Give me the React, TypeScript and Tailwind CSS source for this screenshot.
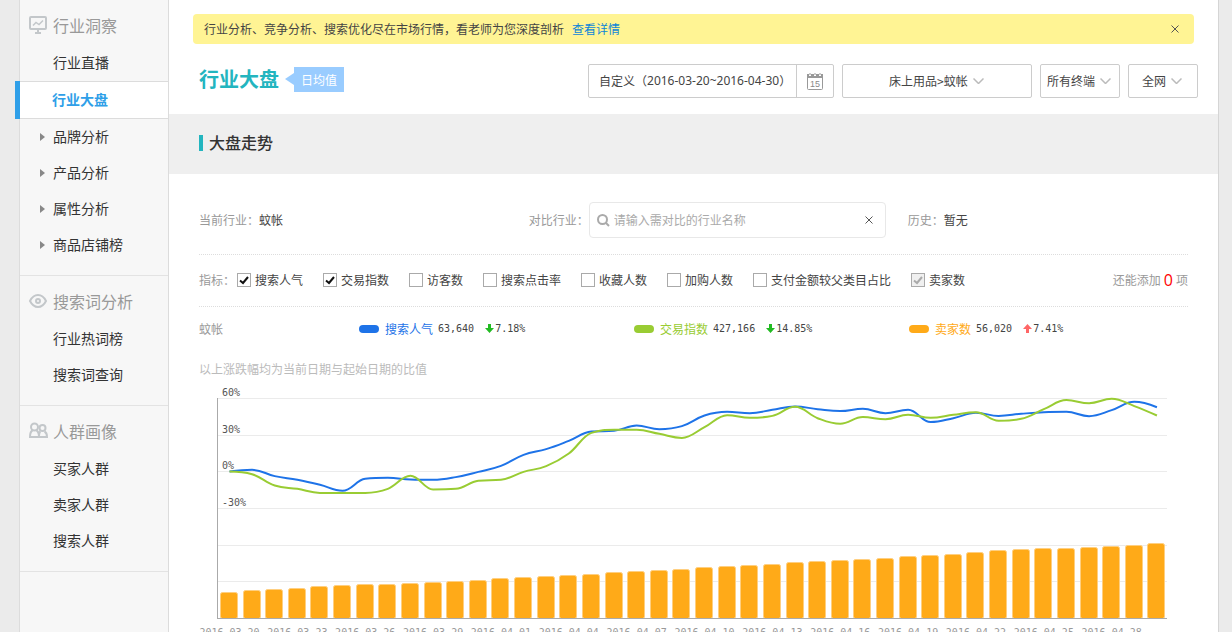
import { useState } from "react";
import type { ReactNode } from "react";

const trendIcon = (
  <svg width="20" height="20" viewBox="0 0 20 20" fill="none" stroke="#c3c7ca" strokeWidth="2">
    <rect x="2" y="2" width="16" height="12" rx="1" />
    <path d="M5 10.500l3-3 3 2 4-4" strokeWidth="1.5" />
    <path d="M10 14v4M7 18h6" />
  </svg>
);

const eyeIcon = (
  <svg width="20" height="20" viewBox="0 0 20 20" fill="none" stroke="#c3c7ca" strokeWidth="2">
    <path d="M2 10c2-4 5-6 8-6s6 2 8 6c-2 4-5 6-8 6s-6-2-8-6z" />
    <circle cx="10" cy="10" r="2" />
  </svg>
);

const peopleIcon = (
  <svg width="20" height="20" viewBox="0 0 20 20" fill="none" stroke="#c3c7ca" strokeWidth="2">
    <circle cx="6.500" cy="6" r="3.500" />
    <circle cx="14.500" cy="7" r="3" />
    <path d="M4.500 9.500C2.500 10.500 2 12 2 16h9c0-4-.5-5.500-2.500-6.500" />
    <path d="M12.500 10.500c-1 .5-1.500 1.500-1.500 5.500h8c0-3.500-.5-4.500-2.500-5.500" />
  </svg>
);

interface MenuItem {
  name: string;
  active?: boolean;
  expandable?: boolean;
}

interface MenuGroup {
  title: string;
  icon: ReactNode;
  items: MenuItem[];
}

const menu: MenuGroup[] = [
  {
    title: "行业洞察",
    icon: trendIcon,
    items: [
      { name: "行业直播" },
      { name: "行业大盘", active: true },
      { name: "品牌分析", expandable: true },
      { name: "产品分析", expandable: true },
      { name: "属性分析", expandable: true },
      { name: "商品店铺榜", expandable: true },
    ],
  },
  {
    title: "搜索词分析",
    icon: eyeIcon,
    items: [{ name: "行业热词榜" }, { name: "搜索词查询" }],
  },
  {
    title: "人群画像",
    icon: peopleIcon,
    items: [{ name: "买家人群" }, { name: "卖家人群" }, { name: "搜索人群" }],
  },
];

const metrics = [
  { name: "搜索人气", checked: true },
  { name: "交易指数", checked: true },
  { name: "访客数" },
  { name: "搜索点击率" },
  { name: "收藏人数" },
  { name: "加购人数" },
  { name: "支付金额较父类目占比" },
  { name: "卖家数", checked: true, disabled: true },
];

const summary = [
  { name: "搜索人气", value: "63,640", change: "7.18%", up: false, pill: "bg-[#1e73e8]", text: "text-[#1e73e8]" },
  { name: "交易指数", value: "427,166", change: "14.85%", up: false, pill: "bg-[#99cc33]", text: "text-[#99cc33]" },
  { name: "卖家数", value: "56,020", change: "7.41%", up: true, pill: "bg-[#ffaa18]", text: "text-[#ffaa18]" },
];

// change against the first day, in percent
const searchTrend = [
  0, 1.4, -3.8, -6.8, -10.9, -15.8, -6, -5.2, -6.5, -6.8, -4.6, -0.3, 4.6, 13.6, 18.3, 25.1, 32.7, 33.3, 37.6, 34.6,
  37.1, 45.8, 48.8, 47.7, 50.5, 53.2, 51, 49.4, 51.3, 47.7, 50.5, 40.4, 43.6, 48, 45.5, 47.2, 48.5, 48.8, 45.3, 50.2,
  57, 52.6,
];

const tradeTrend = [
  0, -2.2, -11.5, -14.2, -17.5, -17.5, -17.5, -14.2, -3.5, -14.7, -14.2, -7.6, -6.8, -0.3, 4.4, 14.7, 31.6, 34.1, 34.1,
  30.8, 27.5, 36.3, 46.1, 43.9, 45.5, 52.9, 43.6, 39, 44.5, 42.8, 46.4, 43.9, 46.4, 48.5, 41.5, 43.1, 51, 58.4, 55.9,
  59.5, 53.5, 45.8,
];

const sellers = [
  26, 28, 29, 30, 32, 33, 34, 34, 35, 36, 37, 38, 40, 41, 42, 43, 44, 46, 47, 48, 49, 51, 52, 53, 54, 56, 57, 58, 59,
  60, 62, 63, 64, 66, 68, 69, 70, 70, 71, 72, 73, 75,
];

const dates = [
  "2016-03-20", "2016-03-23", "2016-03-26", "2016-03-29", "2016-04-01", "2016-04-04", "2016-04-07",
  "2016-04-10", "2016-04-13", "2016-04-16", "2016-04-19", "2016-04-22", "2016-04-25", "2016-04-28",
];

const PLOT_LEFT = 18;
const PLOT_RIGHT = 968;
const BASELINE = 234;
const ZERO = 87;

const pointX = (i: number) => 30.5 + i * 22.62;

// smooth curve through the points that never overshoots a local extreme
function spline(values: number[]) {
  const pts = values.map((v, i) => ({ x: pointX(i), y: ZERO + 0.5 - (v * 110) / 90 }));
  let d = `M${pts[0].x} ${pts[0].y}`;
  let ctrl = pts[0];
  for (let i = 1; i < pts.length; i++) {
    const prev = pts[i - 1];
    const cur = pts[i];
    const next = pts[i + 1];
    let left = cur;
    let right = cur;
    if (next) {
      const lx = (1.5 * cur.x + prev.x) / 2.5;
      const rx = (1.5 * cur.x + next.x) / 2.5;
      let ly = (1.5 * cur.y + prev.y) / 2.5;
      let ry = (1.5 * cur.y + next.y) / 2.5;
      const fix = ((ry - ly) * (rx - cur.x)) / (rx - lx) + cur.y - ry;
      ly += fix;
      ry += fix;
      if (ly > prev.y && ly > cur.y) {
        ly = Math.max(prev.y, cur.y);
        ry = 2 * cur.y - ly;
      } else if (ly < prev.y && ly < cur.y) {
        ly = Math.min(prev.y, cur.y);
        ry = 2 * cur.y - ly;
      }
      if (ry > next.y && ry > cur.y) {
        ry = Math.max(next.y, cur.y);
        ly = 2 * cur.y - ry;
      } else if (ry < next.y && ry < cur.y) {
        ry = Math.min(next.y, cur.y);
        ly = 2 * cur.y - ry;
      }
      left = { x: lx, y: ly };
      right = { x: rx, y: ry };
    }
    d += `C${ctrl.x} ${ctrl.y} ${left.x} ${left.y} ${cur.x} ${cur.y}`;
    ctrl = right;
  }
  return d;
}

function TrendChart() {
  return (
    <svg viewBox="0 0 989 260" className="block h-auto w-full font-['DejaVu_Sans_Mono',monospace] text-[10px]">
      {[14, 51, 87, 124, 161, 197].map(y => (
        <rect key={y} x={PLOT_LEFT} y={y} width={PLOT_RIGHT - PLOT_LEFT} height="1" fill="#ebebeb" />
      ))}
      {sellers.map((h, i) => (
        <rect
          key={i}
          x={Math.floor(pointX(i) - 9) + 0.5}
          y={BASELINE - h + 0.5}
          width="17"
          height={h}
          rx="2"
          fill="#ffaa18"
          stroke="#ffcf80"
        />
      ))}
      <rect x={PLOT_LEFT} y="14" width="1" height="221" fill="#aaa" />
      <rect x={PLOT_LEFT} y={BASELINE} width={PLOT_RIGHT - PLOT_LEFT} height="1" fill="#aaa" />
      <g fill="#555">
        <text x="23" y="12">60%</text>
        <text x="23" y="49">30%</text>
        <text x="23" y="85">0%</text>
        <text x="23" y="122">-30%</text>
      </g>
      <path d={spline(searchTrend)} fill="none" stroke="#1e73e8" strokeWidth="2" />
      <path d={spline(tradeTrend)} fill="none" stroke="#99cc33" strokeWidth="2" />
      <g fill="#999" textAnchor="middle">
        {dates.map((date, i) => (
          <text key={date} x={pointX(i * 3)} y="252">{date}</text>
        ))}
      </g>
    </svg>
  );
}

function Sidebar() {
  return (
    <nav className="w-[150px] shrink-0 border-x border-[#dcdcdc] bg-[#f7f7f7] text-sm">
      {menu.map(group => (
        <div key={group.title} className="border-b border-[#e3e3e3] pt-1 pb-3">
          <h2 className="flex h-[41px] items-center gap-[5px] pl-2 text-base text-[#999]">
            {group.icon}
            {group.title}
          </h2>
          <ul>
            {group.items.map(item => (
              <li key={item.name}>
                {item.active ? (
                  <a
                    href="#"
                    aria-current="page"
                    className="-ml-[5px] flex h-[38px] items-center border-l-[5px] border-[#2f9fe8] bg-white pb-0.5 pl-8 font-bold text-[#2f9fe8] shadow-[inset_0_1px_#dcdcdc,inset_0_-1px_#dcdcdc]"
                  >
                    {item.name}
                  </a>
                ) : (
                  <a href="#" className="flex h-9 items-center text-[#333]">
                    <span className="flex w-[33px] pl-5">
                      {item.expandable && (
                        <svg width="5" height="8" viewBox="0 0 5 8" fill="#888">
                          <path d="M0 0l5 4-5 4z" />
                        </svg>
                      )}
                    </span>
                    <span className="pb-0.5">{item.name}</span>
                  </a>
                )}
              </li>
            ))}
          </ul>
        </div>
      ))}
    </nav>
  );
}

function Select({ label, value, className, arrow }: { label: string; value: string; className: string; arrow: string }) {
  return (
    <div className="relative">
      <select
        aria-label={label}
        className={`h-[34px] appearance-none rounded-xs border border-[#ccc] bg-white text-xs text-[#444] ${className}`}
      >
        <option>{value}</option>
      </select>
      <svg
        className={`pointer-events-none absolute top-[14px] ${arrow}`}
        width="11"
        height="6"
        viewBox="0 0 11 6"
        fill="none"
        stroke="#bbb"
        strokeWidth="1.5"
      >
        <path d="M0.500 0.500l5 5 5-5" />
      </svg>
    </div>
  );
}

function CloseIcon() {
  return (
    <svg width="8" height="8" viewBox="0 0 8 8" stroke="#555" fill="none">
      <path d="M0.500 0.500l7 7M7.500 0.500l-7 7" />
    </svg>
  );
}

function CalendarIcon() {
  return (
    <svg width="16" height="17" viewBox="0 0 16 17">
      <path d="M0.500 4.500v11a1 1 0 0 0 1 1h13a1 1 0 0 0 1-1v-11" fill="none" stroke="#999" />
      <path d="M0 1h2v2h2V1h3v2h2V1h3v2h2V1h2v4H0z" fill="#999" />
      <path d="M3 0v2M8 0v2M13 0v2" stroke="#999" />
      <text x="8" y="14" textAnchor="middle" fill="#888" className="font-['Liberation_Sans',sans-serif] text-[9px]">
        15
      </text>
    </svg>
  );
}

function Header() {
  return (
    <header className="flex items-center justify-between pt-5 pr-5 pb-4 pl-[30px]">
      <div className="flex items-center pb-1">
        <h1 className="text-xl leading-[30px] font-bold text-[#23b5bf]">行业大盘</h1>
        <svg className="ml-[6px]" width="9" height="12" viewBox="0 0 9 12" fill="#99ccff">
          <path d="M9 0v12L0 6z" />
        </svg>
        <span className="bg-[#99ccff] px-[7px] text-xs leading-[25px] text-white">日均值</span>
      </div>
      <div className="flex gap-2">
        <div className="flex h-[34px] w-[246px] rounded-xs border border-[#ccc]">
          <button type="button" className="flex flex-1 items-center pl-[10px] text-xs whitespace-nowrap text-[#444]">
            自定义（<span className="font-['Noto_Sans',sans-serif]">2016-03-20~2016-04-30</span>）
          </button>
          <button type="button" aria-label="选择日期" className="flex w-[37px] items-center justify-center border-l border-[#ccc]">
            <CalendarIcon />
          </button>
        </div>
        <Select label="行业" value="床上用品>蚊帐" className="w-[190px] pl-[46px]" arrow="right-[48px]" />
        <Select label="终端" value="所有终端" className="w-20 pl-[6px]" arrow="right-[9px]" />
        <Select label="范围" value="全网" className="w-[70px] pl-[13px]" arrow="right-4" />
      </div>
    </header>
  );
}

function Metrics() {
  const [picked, setPicked] = useState(metrics.filter(m => m.checked).map(m => m.name));

  const toggle = (name: string) =>
    setPicked(picked.includes(name) ? picked.filter(n => n !== name) : [...picked, name]);

  return (
    <div className="flex h-[52px] items-center border-b border-dotted border-[#ddd] pb-0.5">
      <span className="w-[38px] text-[#999]">指标：</span>
      <div className="flex gap-5">
        {metrics.map(m => (
          <label key={m.name} className="flex items-center gap-1">
            <span className="relative flex size-[14px]">
              <input
                type="checkbox"
                checked={picked.includes(m.name)}
                disabled={m.disabled}
                onChange={() => toggle(m.name)}
                className="size-full appearance-none border border-[#aaa] bg-white disabled:bg-[#f0f0f0]"
              />
              {picked.includes(m.name) && (
                <svg
                  className={`pointer-events-none absolute inset-0 ${m.disabled ? "text-[#aaa]" : "text-[#111]"}`}
                  width="14"
                  height="14"
                  viewBox="0 0 14 14"
                  fill="none"
                  stroke="currentColor"
                  strokeWidth="2"
                >
                  <path d="M3 7.500l3 2.500 5-6" />
                </svg>
              )}
            </span>
            {m.name}
          </label>
        ))}
      </div>
      <span className="ml-auto flex items-center gap-[3px] text-[#999]">
        还能添加
        <span className="font-['Open_Sans',sans-serif] text-base leading-4 text-[#f00]">0</span>
        项
      </span>
    </div>
  );
}

function Summary() {
  return (
    <div className="flex h-[45px] items-center pb-0.5">
      <span className="w-40 text-[#999]">蚊帐</span>
      {summary.map(s => (
        <div key={s.name} className="flex w-[275px] items-center">
          <span className={`mr-[6px] h-2 w-5 rounded-full ${s.pill}`} />
          <span className={s.text}>{s.name}</span>
          <span className="ml-[5px] font-['DejaVu_Sans_Mono',monospace] text-[10px]">{s.value}</span>
          <svg className="mr-px ml-[11px]" width="9" height="9" viewBox="0 0 9 9" fill={s.up ? "#ff6666" : "#22bb22"}>
            {s.up ? <path d="M4.500 0L9 5H6v4H3V5H0z" /> : <path d="M3 0h3v4h3L4.500 9 0 4h3z" />}
          </svg>
          <span className="font-['DejaVu_Sans_Mono',monospace] text-[10px]">{s.change}</span>
        </div>
      ))}
    </div>
  );
}

export default function App() {
  return (
    <div className="flex h-screen overflow-hidden bg-[#ebebeb] pr-[13px] pl-[19px] font-['Noto_Sans_CJK_SC',sans-serif] text-[#444]">
      <Sidebar />
      <main className="min-w-0 flex-1 border-r border-[#d5d5d5] bg-white pt-[14px] text-xs">
        <div className="mx-6 flex h-[30px] items-center rounded-sm bg-[#fff494] pr-[15px] pl-[11px]">
          行业分析、竞争分析、搜索优化尽在市场行情，看老师为您深度剖析
          <a href="#" className="ml-2 text-[#0d85d8]">查看详情</a>
          <button type="button" aria-label="关闭" className="ml-auto">
            <CloseIcon />
          </button>
        </div>
        <Header />
        <div className="flex h-[60px] items-center bg-[#efefef] pb-0.5 pl-[30px]">
          <h2 className="flex items-center gap-[6px] text-base leading-4 font-medium text-[#333]">
            <span className="h-4 w-1 bg-[#23b5bf]" />
            <span className="pb-0.5">大盘走势</span>
          </h2>
        </div>
        <section className="px-[30px] pt-3">
          <div className="flex h-[69px] items-center border-b border-dotted border-[#ddd]">
            <div className="w-1/3">
              <span className="text-[#999]">当前行业：</span>蚊帐
            </div>
            <label htmlFor="compare" className="text-[#999]">对比行业：</label>
            <div className="flex h-9 w-[297px] items-center rounded-sm border border-[#e8e8e8] pr-3 pl-[7px]">
              <svg width="13" height="13" viewBox="0 0 13 13" fill="none" stroke="#aaa" strokeWidth="2">
                <circle cx="5.500" cy="5.500" r="4.500" />
                <path d="M9 9l3 3" />
              </svg>
              <input
                id="compare"
                type="text"
                placeholder="请输入需对比的行业名称"
                className="ml-1 min-w-0 flex-1 placeholder:text-[#aaa]"
              />
              <button type="button" aria-label="清空">
                <CloseIcon />
              </button>
            </div>
            <span className="ml-[22px] text-[#999]">历史：</span>暂无
          </div>
          <Metrics />
          <Summary />
          <p className="pt-2 pb-[6px] leading-[18px] text-[#bbb]">以上涨跌幅均为当前日期与起始日期的比值</p>
          <TrendChart />
        </section>
      </main>
    </div>
  );
}
